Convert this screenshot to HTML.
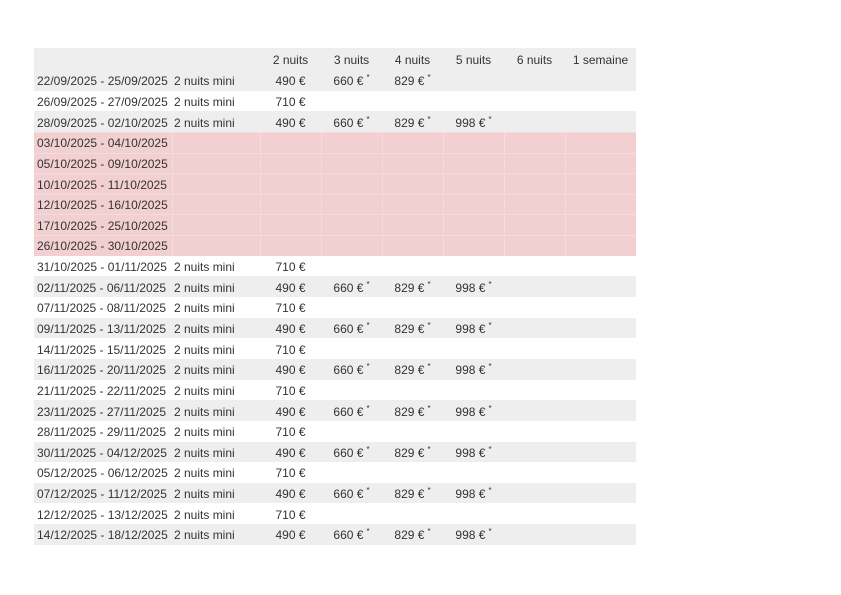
<!DOCTYPE html>
<html><head><meta charset="utf-8"><style>
body{margin:0;background:#fff;width:841px;height:595px;overflow:hidden;font-family:"Liberation Sans",Arial,sans-serif;font-size:12px;color:#333}
table{position:absolute;left:34px;top:48px;border-collapse:collapse;table-layout:fixed;width:602px}
tr{height:20.65px}
td{padding:2px 0 0 0;height:20.65px;white-space:nowrap;text-align:center;line-height:14px;box-sizing:border-box}
td.d{text-align:left;padding-left:3px}
td.m{text-align:left;padding-left:2px}
tr.h{height:22px}
tr.h td{height:22px;padding-top:2px}
tr.g td{background:#eeeeee}
tr.p td{background:#f2d0d1;box-shadow:inset 1px 1px 0 #f5dcdc}
tr.p td:first-child{box-shadow:inset 0 1px 0 #f5dcdc}
sup{font-size:8px;position:relative;top:-5px;vertical-align:baseline;line-height:0;margin-left:3px}
</style></head><body>
<table>
<colgroup><col style="width:138px"><col style="width:88px"><col style="width:61px"><col style="width:61px"><col style="width:61px"><col style="width:61px"><col style="width:61px"><col style="width:71px"></colgroup>
<tr class="h g"><td></td><td></td><td>2 nuits</td><td>3 nuits</td><td>4 nuits</td><td>5 nuits</td><td>6 nuits</td><td>1 semaine</td></tr>
<tr class="g"><td class="d">22/09/2025 - 25/09/2025</td><td class="m">2 nuits mini</td><td>490 €</td><td>660 €<sup>*</sup></td><td>829 €<sup>*</sup></td><td></td><td></td><td></td></tr>
<tr><td class="d">26/09/2025 - 27/09/2025</td><td class="m">2 nuits mini</td><td>710 €</td><td></td><td></td><td></td><td></td><td></td></tr>
<tr class="g"><td class="d">28/09/2025 - 02/10/2025</td><td class="m">2 nuits mini</td><td>490 €</td><td>660 €<sup>*</sup></td><td>829 €<sup>*</sup></td><td>998 €<sup>*</sup></td><td></td><td></td></tr>
<tr class="p"><td class="d">03/10/2025 - 04/10/2025</td><td></td><td></td><td></td><td></td><td></td><td></td><td></td></tr>
<tr class="p"><td class="d">05/10/2025 - 09/10/2025</td><td></td><td></td><td></td><td></td><td></td><td></td><td></td></tr>
<tr class="p"><td class="d">10/10/2025 - 11/10/2025</td><td></td><td></td><td></td><td></td><td></td><td></td><td></td></tr>
<tr class="p"><td class="d">12/10/2025 - 16/10/2025</td><td></td><td></td><td></td><td></td><td></td><td></td><td></td></tr>
<tr class="p"><td class="d">17/10/2025 - 25/10/2025</td><td></td><td></td><td></td><td></td><td></td><td></td><td></td></tr>
<tr class="p"><td class="d">26/10/2025 - 30/10/2025</td><td></td><td></td><td></td><td></td><td></td><td></td><td></td></tr>
<tr><td class="d">31/10/2025 - 01/11/2025</td><td class="m">2 nuits mini</td><td>710 €</td><td></td><td></td><td></td><td></td><td></td></tr>
<tr class="g"><td class="d">02/11/2025 - 06/11/2025</td><td class="m">2 nuits mini</td><td>490 €</td><td>660 €<sup>*</sup></td><td>829 €<sup>*</sup></td><td>998 €<sup>*</sup></td><td></td><td></td></tr>
<tr><td class="d">07/11/2025 - 08/11/2025</td><td class="m">2 nuits mini</td><td>710 €</td><td></td><td></td><td></td><td></td><td></td></tr>
<tr class="g"><td class="d">09/11/2025 - 13/11/2025</td><td class="m">2 nuits mini</td><td>490 €</td><td>660 €<sup>*</sup></td><td>829 €<sup>*</sup></td><td>998 €<sup>*</sup></td><td></td><td></td></tr>
<tr><td class="d">14/11/2025 - 15/11/2025</td><td class="m">2 nuits mini</td><td>710 €</td><td></td><td></td><td></td><td></td><td></td></tr>
<tr class="g"><td class="d">16/11/2025 - 20/11/2025</td><td class="m">2 nuits mini</td><td>490 €</td><td>660 €<sup>*</sup></td><td>829 €<sup>*</sup></td><td>998 €<sup>*</sup></td><td></td><td></td></tr>
<tr><td class="d">21/11/2025 - 22/11/2025</td><td class="m">2 nuits mini</td><td>710 €</td><td></td><td></td><td></td><td></td><td></td></tr>
<tr class="g"><td class="d">23/11/2025 - 27/11/2025</td><td class="m">2 nuits mini</td><td>490 €</td><td>660 €<sup>*</sup></td><td>829 €<sup>*</sup></td><td>998 €<sup>*</sup></td><td></td><td></td></tr>
<tr><td class="d">28/11/2025 - 29/11/2025</td><td class="m">2 nuits mini</td><td>710 €</td><td></td><td></td><td></td><td></td><td></td></tr>
<tr class="g"><td class="d">30/11/2025 - 04/12/2025</td><td class="m">2 nuits mini</td><td>490 €</td><td>660 €<sup>*</sup></td><td>829 €<sup>*</sup></td><td>998 €<sup>*</sup></td><td></td><td></td></tr>
<tr><td class="d">05/12/2025 - 06/12/2025</td><td class="m">2 nuits mini</td><td>710 €</td><td></td><td></td><td></td><td></td><td></td></tr>
<tr class="g"><td class="d">07/12/2025 - 11/12/2025</td><td class="m">2 nuits mini</td><td>490 €</td><td>660 €<sup>*</sup></td><td>829 €<sup>*</sup></td><td>998 €<sup>*</sup></td><td></td><td></td></tr>
<tr><td class="d">12/12/2025 - 13/12/2025</td><td class="m">2 nuits mini</td><td>710 €</td><td></td><td></td><td></td><td></td><td></td></tr>
<tr class="g"><td class="d">14/12/2025 - 18/12/2025</td><td class="m">2 nuits mini</td><td>490 €</td><td>660 €<sup>*</sup></td><td>829 €<sup>*</sup></td><td>998 €<sup>*</sup></td><td></td><td></td></tr>
</table>
</body></html>
